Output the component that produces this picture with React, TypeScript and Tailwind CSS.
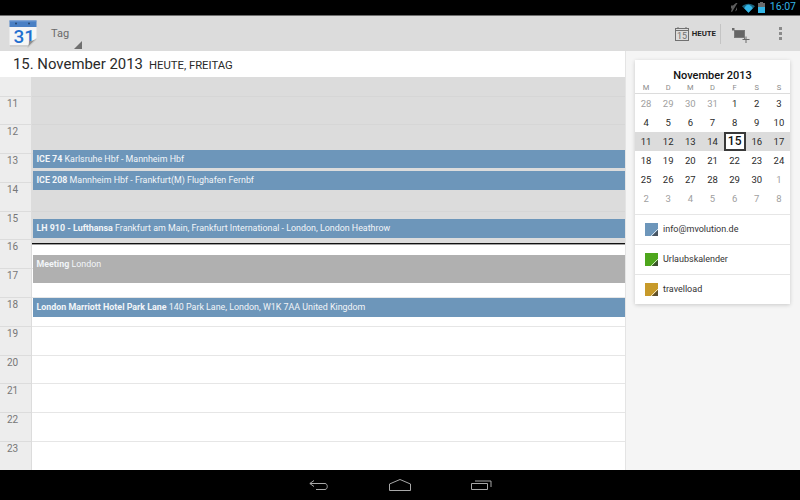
const hours = [11, 12, 13, 14, 15, 16, 17, 18, 19, 20, 21, 22, 23];
const heads = ["M", "D", "M", "D", "F", "S", "S"];
const weeks = [
  [28, 29, 30, 31, 1, 2, 3],
  [4, 5, 6, 7, 8, 9, 10],
  [11, 12, 13, 14, 15, 16, 17],
  [18, 19, 20, 21, 22, 23, 24],
  [25, 26, 27, 28, 29, 30, 1],
  [2, 3, 4, 5, 6, 7, 8],
];

function isMuted(w: number, d: number) {
  return (w === 0 && d < 4) || (w === 4 && d === 6) || w === 5;
}

function CalendarLogo() {
  return (
    <svg width="28" height="28" viewBox="0 0 28 28">
      <path d="M0.5 7h27v12l-8 8H0.5z" fill="#f6f6f6" />
      <path d="M0.5 25h19v2H0.5z" fill="#cfcfcf" />
      <path d="M0.5 0.5h27V7H0.5z" fill="#4a80c4" />
      <path d="M0.5 0.5h27v1H0.5z" fill="#6f9bd4" />
      <circle cx="7" cy="3.5" r="1" fill="#27466e" />
      <circle cx="20" cy="3.5" r="1" fill="#27466e" />
      <text x="4.5" y="23" fontSize="19" fontWeight="500" fill="#1f6fd0" fontFamily="Roboto, sans-serif">31</text>
      <path d="M27.5 18v1.5l-8 8h-1.5c2-1.5 2-4.5 2-6.500 3 0 5.500-.5 7.500-3z" fill="#c4c4c4" />
      <path d="M20 21c3 0 5.500-.5 7.500-3L18.500 27c1.500-1.500 1.500-4 1.500-6z" fill="#8e8e8e" />
    </svg>
  );
}

function Swatch({ color, dark }: { color: string; dark: string }) {
  return (
    <svg width="13" height="13" viewBox="0 0 13 13" className="shrink-0">
      <rect width="13" height="13" fill={color} />
      <path d="M13 7v6H7z" fill={dark} />
      <path d="M13 6L6 13" stroke="#ffffff" strokeWidth="0.7" />
    </svg>
  );
}

function Event({ top, height, bg, bold, rest }: { top: string; height: string; bg: string; bold: string; rest: string }) {
  return (
    <div className={`absolute left-px right-0 ${top} ${height} ${bg} pl-[3.5px] text-[8.9px] leading-[18px] text-[#f2f5f8] whitespace-nowrap`}>
      <span className="font-bold">{bold}</span> {rest}
    </div>
  );
}

export default function App() {
  return (
    <div className="w-[800px] h-[500px] flex flex-col overflow-hidden bg-white font-['Roboto',sans-serif]">
      <div className="h-[15px] bg-black flex items-center justify-end pr-[4px] gap-[3px]">
        <svg width="9" height="11" viewBox="0 0 9 11">
          <path d="M6 1L3 3.500H1v3h1l-1 3 1 .5 5.500-9z M7 5v3l-2 1.500" fill="#5c5c5c" />
        </svg>
        <svg width="13" height="10" viewBox="0 0 14 10">
          <path d="M0 3.200C3.600-.4 10.400-.4 14 3.200L7 10z" fill="#33b5e5" opacity="0.55" />
          <path d="M2.400 5.200C5-.2 9 .8 11.600 5.200L7 10z" fill="#33b5e5" />
        </svg>
        <svg width="7" height="11" viewBox="0 0 7 11">
          <rect x="2" y="0" width="3" height="1" fill="#6b6b6b" />
          <rect x="0" y="1" width="7" height="4" fill="#6b6b6b" />
          <rect x="0" y="5" width="7" height="6" fill="#33b5e5" />
        </svg>
        <span className="text-[10.500px] leading-none text-[#33b5e5] ml-[2px]">16:07</span>
      </div>

      <div className="h-[36px] bg-[#dcdcdc] border-t border-[#6e6e6e] flex items-center">
        <div className="ml-[9px] w-[28px] h-[28px]"><CalendarLogo /></div>
        <div className="relative ml-[14px] w-[32px] h-[32px]">
          <span className="absolute left-0 top-[9px] text-[11px] leading-[14px] text-[#6a6a6a]">Tag</span>
          <span className="absolute right-[1px] bottom-[1px] w-0 h-0 border-l-[8px] border-l-transparent border-b-[8px] border-b-[#6f6f6f]" />
        </div>
        <div className="ml-auto flex items-center h-full">
          <svg width="14" height="14" viewBox="0 0 14 14">
            <rect x="0.5" y="1.500" width="13" height="12" fill="none" stroke="#707070" />
            <path d="M0.500 3.500h13M3 0v2M11 0v2" stroke="#707070" />
            <text x="7" y="12" textAnchor="middle" fontSize="9" fill="#707070" fontFamily="Roboto, sans-serif">15</text>
          </svg>
          <span className="ml-[3px] text-[7.800px] font-bold text-[#222]">HEUTE</span>
          <div className="ml-[4px] w-px h-[20px] bg-[#c4c4c4]" />
          <svg width="18" height="15" viewBox="0 0 18 15" className="ml-[11px] mt-[4px]">
            <rect x="2.500" y="2.500" width="10" height="7" fill="#666" stroke="#7a7a7a" />
            <path d="M0 0h2.500v2.500H0z" fill="#6a6a6a" />
            <path d="M2 2.500h11M12.500 10v2" stroke="#777" />
            <path d="M10.500 11.500h7M14 8.500v6.500" stroke="#6a6a6a" />
          </svg>
          <div className="ml-[29px] mr-[18px] flex flex-col gap-[2px]">
            <span className="w-[3px] h-[3px] bg-[#8a8a8a]" />
            <span className="w-[3px] h-[3px] bg-[#8a8a8a]" />
            <span className="w-[3px] h-[3px] bg-[#8a8a8a]" />
          </div>
        </div>
      </div>

      <div className="flex-1 flex min-h-0">
        <div className="w-[625px] flex flex-col">
          <div className="h-[26px] bg-white flex items-baseline pl-[13px] pt-[3px] text-[#2a2a2a]">
            <span className="text-[14.900px] leading-[20px]">15. November 2013</span>
            <span className="ml-[6px] text-[11.300px] leading-[20px]">HEUTE, FREITAG</span>
          </div>
          <div className="flex-1 flex min-h-0 overflow-hidden">
            <div className="w-[32px] shrink-0 bg-[#ededed] border-r border-[#dcdcdc] text-[#777] text-[10px]">
              <div className="h-[19.500px] border-b border-[#dcdcdc]" />
              {hours.map((h) => (
                <div key={h} className="h-[28.800px] border-b border-[#dcdcdc] pl-[7px] leading-[14px]">{h}</div>
              ))}
            </div>
            <div className="relative flex-1 bg-white">
              <div className="h-[19.500px] bg-[#dcdcdc] border-b border-[#d6d6d6]" />
              {hours.map((h) => (
                <div key={h} className={`h-[28.800px] border-b ${h < 16 ? "bg-[#dcdcdc] border-[#d6d6d6]" : "bg-white border-[#e6e6e6]"}`} />
              ))}
              <div className="absolute left-0 right-0 top-[162px] h-[4px] bg-[#dcdcdc]" />
              <div className="absolute left-0 right-0 top-[166px] h-px bg-[#111] shadow-[0_1px_0_#a0a0a0]" />
              <Event top="top-[72.500px]" height="h-[18.500px]" bg="bg-[#6d96ba]" bold="ICE 74" rest="Karlsruhe Hbf - Mannheim Hbf" />
              <Event top="top-[94px]" height="h-[18.500px]" bg="bg-[#6d96ba]" bold="ICE 208" rest="Mannheim Hbf - Frankfurt(M) Flughafen Fernbf" />
              <Event top="top-[142px]" height="h-[18.500px]" bg="bg-[#6d96ba]" bold="LH 910 - Lufthansa" rest="Frankfurt am Main, Frankfurt International - London, London Heathrow" />
              <Event top="top-[177.500px]" height="h-[28px]" bg="bg-[#b0b0b0]" bold="Meeting" rest="London" />
              <Event top="top-[221px]" height="h-[18.500px]" bg="bg-[#6d96ba]" bold="London Marriott Hotel Park Lane" rest="140 Park Lane, London, W1K 7AA United Kingdom" />
            </div>
          </div>
        </div>

        <div className="w-[175px] bg-[#f5f5f5] border-l border-[#e4e4e4] pl-[9px] pt-[9px]">
          <div className="w-[155px] h-[244px] bg-white shadow-[0_1px_4px_rgba(0,0,0,0.18)]">
            <div className="text-center text-[11px] font-medium text-[#111] pt-[9px] leading-[14px]">November 2013</div>
            <div className="grid grid-cols-7 h-[11px] border-b border-[#dcdcdc] text-[7.500px] text-[#8a8a8a] text-center leading-[10px]">
              {heads.map((d, i) => <span key={i}>{d}</span>)}
            </div>
            {weeks.map((row, w) => (
              <div key={w} className={`grid grid-cols-7 h-[19.100px] text-[9.500px] text-center leading-[19px] ${w === 2 ? "bg-[#dcdcdc]" : ""}`}>
                {row.map((d, i) => (
                  <div key={i} className={`${isMuted(w, i) ? "text-[#a0a0a0]" : "text-[#2a2a2a]"} ${w === 2 && i === 4 ? "bg-white border-2 border-[#3a3a3a] text-[12px] font-medium leading-[15px] text-[#111]" : ""}`}>{d}</div>
                ))}
              </div>
            ))}
            <div className="mt-[5.400px]">
              {[
                ["info@mvolution.de", "#6d96ba", "#4a5560"],
                ["Urlaubskalender", "#4ea61c", "#3d5030"],
                ["travelload", "#c79a2a", "#5c5030"],
              ].map(([name, c, dk]) => (
                <div key={name} className="h-[30px] border-t border-[#e6e6e6] flex items-center pl-[10px] gap-[5px] text-[9px] text-[#333]">
                  <Swatch color={c} dark={dk} />
                  <span>{name}</span>
                </div>
              ))}
            </div>
          </div>
        </div>
      </div>

      <div className="h-[30px] bg-black flex items-center justify-center gap-[60px]">
        <svg width="20" height="10" viewBox="0 0 20 10" fill="none" stroke="#a8a8a8" strokeWidth="1">
          <path d="M5 0.500L0.800 3.500L5 6.500M1 3.500h15c3 0 3 6 0 6H7" />
        </svg>
        <svg width="22" height="12" viewBox="0 0 22 12" fill="none" stroke="#a8a8a8" strokeWidth="1">
          <path d="M0.500 5L11 0.500L21.500 5v6.500H0.500z" />
        </svg>
        <svg width="21" height="10" viewBox="0 0 21 10" fill="none" stroke="#a8a8a8" strokeWidth="1">
          <path d="M0.500 3.500h16v6H0.500z M4 1h16v6" />
        </svg>
      </div>
    </div>
  );
}
